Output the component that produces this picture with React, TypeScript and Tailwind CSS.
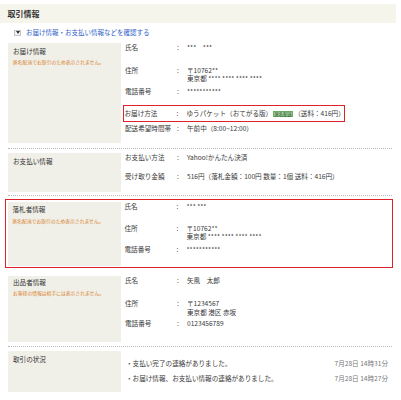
import React from "react";

const F = { fontFamily: '"Noto Sans CJK JP", "Noto Sans", sans-serif' };

function Row({
  label,
  children,
  cls,
}: {
  label: string;
  children: React.ReactNode;
  cls: string;
}) {
  return (
    <div className={`flex items-start leading-[8.5px] ${cls}`}>
      <div className="w-[52px] shrink-0 whitespace-nowrap">{label}</div>
      <div className="w-[10px] shrink-0">:</div>
      <div className="whitespace-nowrap">{children}</div>
    </div>
  );
}

function Panel({
  title,
  note,
  cls,
  noteCls,
}: {
  title: string;
  note?: string;
  cls: string;
  noteCls?: string;
}) {
  return (
    <div className={`w-[113px] shrink-0 bg-[#f0efe8] pl-[5px] ${cls}`}>
      <div className="leading-[9px] text-[6.6px] text-[#333]">{title}</div>
      {note && (
        <div
          className={`leading-[6px] text-[4.8px] text-[#d9822b] whitespace-nowrap ${noteCls}`}
        >
          {note}
        </div>
      )}
    </div>
  );
}

function Sep({ cls }: { cls: string }) {
  return (
    <div className={`flex items-center w-[384px] ${cls}`}>
      <div className="w-full border-t border-dotted border-[#b8b8b8]" />
    </div>
  );
}

export default function App() {
  return (
    <div
      className="w-[401px] h-[400px] overflow-hidden bg-white text-[#383838] text-[6.6px]"
      style={F}
    >
      <div className="mt-[4px] h-[19px] w-[396px] bg-[#f5f5eb] flex items-center pl-[7.5px] text-[8px] font-bold text-[#333]">
        取引情報
      </div>
      <div className="h-[20px] pb-[1px] flex items-center pl-[14px]">
        <div className="w-[7px] h-[6px] border border-[#c4c4c4] bg-[#f4f4f4] flex items-center justify-center">
          <svg width="4" height="3" viewBox="0 0 4 3">
            <path d="M0 0 L4 0 L2 3 Z" fill="#333" />
          </svg>
        </div>
        <div className="ml-[5px] text-[6.5px] text-[#2f5fc8]">
          お届け情報・お支払い情報などを確認する
        </div>
      </div>

      <div className="ml-[8px] w-[384px]">
        {/* Section 1 */}
        <div className="flex h-[100px]">
          <Panel
            title="お届け情報"
            note="匿名配送でお取引のため表示されません。"
            cls="pt-[4px]"
            noteCls="mt-[3px]"
          />
          <div className="flex-1 pl-[4px] flex flex-col">
            <Row label="氏名" cls="h-[19px] items-center">
              ***　***
            </Row>
            <Row label="住所" cls="h-[25px] pt-[3.5px]">
              <div>〒10762**</div>
              <div>東京都 **** **** **** ****</div>
            </Row>
            <Row label="電話番号" cls="h-[16px] items-center">
              ***********
            </Row>
            <div className="h-[21px] flex items-center">
              <div className="-ml-[2.5px] w-[222px] h-[17px] border-[1.5px] border-[#e0202a] pl-[1px] flex items-center">
                <Row label="お届け方法" cls="items-center">
                  <span className="flex items-center">
                    ゆうパケット（おてがる版）
                    <span className="mx-[1px] h-[6px] w-[20px] leading-[5px] text-[4.2px] bg-[#9ccb98] border-[0.5px] border-[#6aa867] text-[#2d5a2b] text-center">
                      匿名配送
                    </span>
                    （送料：416円）
                  </span>
                </Row>
              </div>
            </div>
            <Row label="配送希望時間帯" cls="h-[15px] items-center">
              午前中（8:00~12:00）
            </Row>
          </div>
        </div>

        <Sep cls="h-[10px]" />

        {/* Section 2 */}
        <div className="flex h-[39px]">
          <Panel title="お支払い情報" cls="pt-[3.5px]" />
          <div className="flex-1 pl-[4px] flex flex-col">
            <Row label="お支払い方法" cls="h-[19px] items-center">
              Yahoo!かんたん決済
            </Row>
            <Row label="受け取り金額" cls="h-[17px] items-center">
              516円（落札金額：100円 数量：1個 送料：416円）
            </Row>
          </div>
        </div>

        <Sep cls="h-[7px]" />

        {/* Section 3 */}
        <div className="-ml-[3px] w-[388px] border-[1.5px] border-[#e0202a] p-[1.5px]">
          <div className="flex h-[64px]">
            <Panel
              title="落札者情報"
              note="匿名配送でお取引のため表示されません。"
              cls="pt-[3px]"
              noteCls="mt-[4px]"
            />
            <div className="flex-1 pl-[4px] flex flex-col">
              <Row label="氏名" cls="h-[19px] items-center">
                *** ***
              </Row>
              <Row label="住所" cls="h-[24px] pt-[3px]">
                <div>〒10762**</div>
                <div>東京都 **** **** **** ****</div>
              </Row>
              <Row label="電話番号" cls="h-[17px] items-center">
                ***********
              </Row>
            </div>
          </div>
        </div>

        {/* Section 4 */}
        <div className="flex h-[66px] mt-[8px]">
          <Panel
            title="出品者情報"
            note="お客様の情報は相手には表示されません。"
            cls="pt-[2px]"
            noteCls="mt-[3px]"
          />
          <div className="flex-1 pl-[4px] flex flex-col">
            <Row label="氏名" cls="h-[20px] items-center">
              矢風　太郎
            </Row>
            <Row label="住所" cls="h-[23px] pt-[3px]">
              <div>〒1234567</div>
              <div>東京都 港区 赤坂</div>
            </Row>
            <Row label="電話番号" cls="h-[18px] items-center">
              0123456789
            </Row>
          </div>
        </div>

        <Sep cls="h-[9px]" />

        {/* Section 5 */}
        <div className="flex h-[41px]">
          <Panel title="取引の状況" cls="pt-[4px]" />
          <div className="flex-1 pl-[5px] pr-[4px] pt-[7.5px] flex flex-col gap-[6px] leading-[9px]">
            <div className="flex justify-between whitespace-nowrap">
              <span>・支払い完了の連絡がありました。</span>
              <span className="text-[#777]">7月28日 14時31分</span>
            </div>
            <div className="flex justify-between whitespace-nowrap">
              <span>・お届け情報、お支払い情報の連絡がありました。</span>
              <span className="text-[#777]">7月28日 14時27分</span>
            </div>
          </div>
        </div>
      </div>
    </div>
  );
}
